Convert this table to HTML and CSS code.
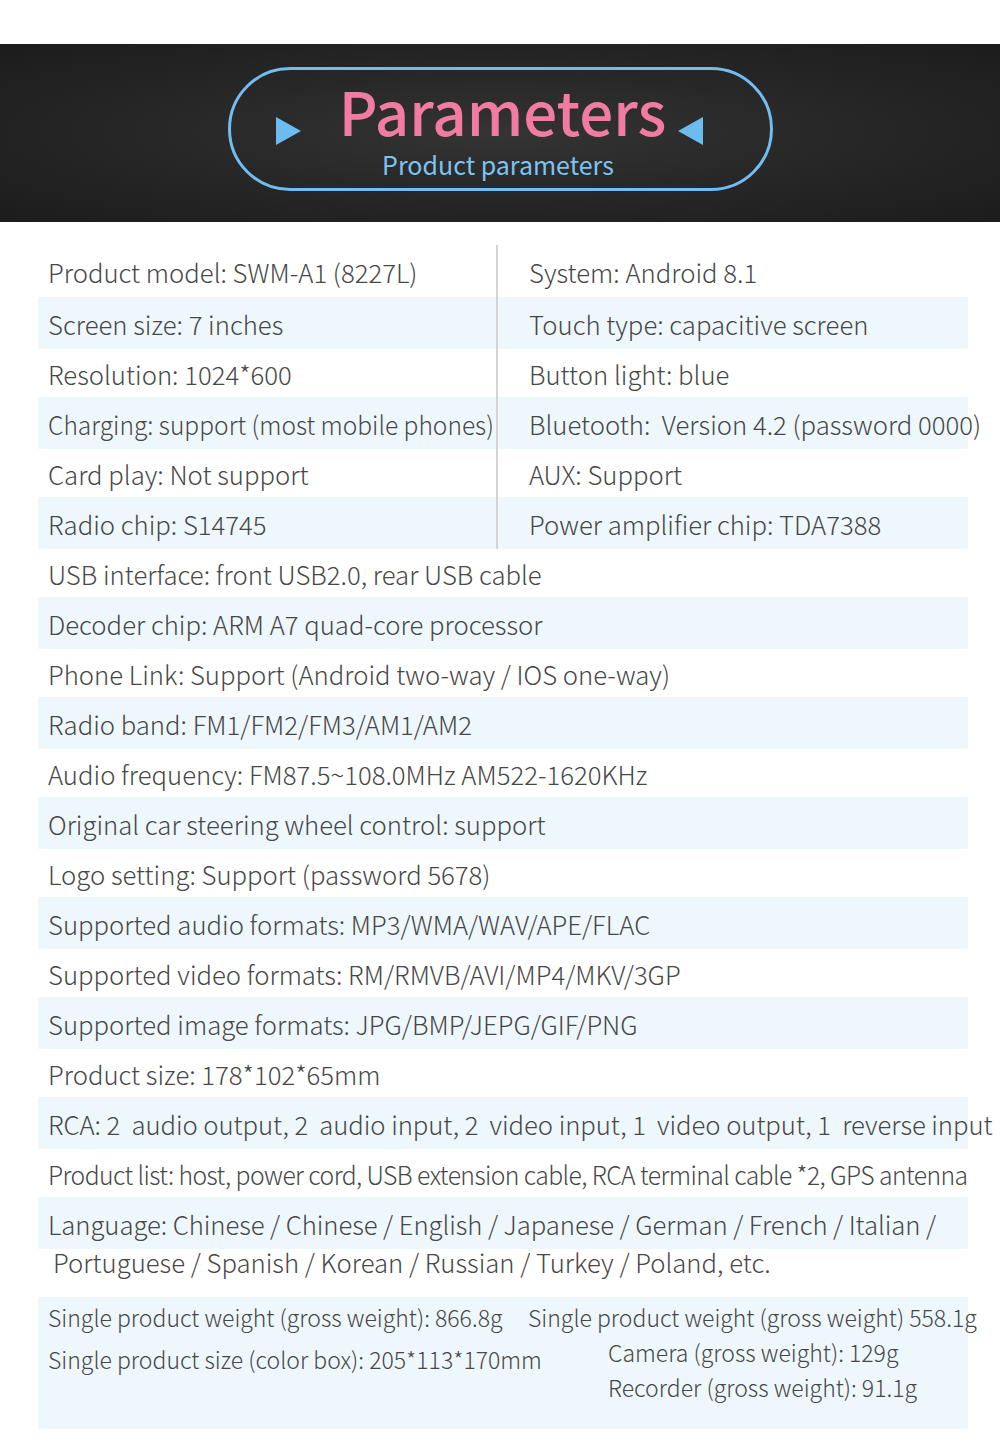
FILE: index.html
```html
<!DOCTYPE html>
<html lang="en">
<head>
    <meta charset="UTF-8">
    <meta name="viewport" content="width=device-width, initial-scale=1.0">
    <title>Parameters</title>
    <link rel="stylesheet" href="styles.css">
</head>
<body>
    <div class="top-gap"></div>

    <header class="banner">
        <div class="pill">
            <div class="title-row">
                <span class="tri tri-right"></span>
                <h1>Parameters</h1>
                <span class="tri tri-left"></span>
            </div>
            <div class="subtitle">Product parameters</div>
        </div>
    </header>

    <main class="specs">
        <section class="split">
            <div class="split-row first">
                <div class="cell left">Product model: SWM-A1 (8227L)</div>
                <div class="cell right">System: Android 8.1</div>
            </div>
            <div class="split-row band">
                <div class="cell left">Screen size: 7 inches</div>
                <div class="cell right">Touch type: capacitive screen</div>
            </div>
            <div class="split-row">
                <div class="cell left">Resolution: 1024*600</div>
                <div class="cell right">Button light: blue</div>
            </div>
            <div class="split-row band">
                <div class="cell left"><span class="squeeze">Charging: support (most mobile phones)</span></div>
                <div class="cell right">Bluetooth:&nbsp; Version 4.2 (password 0000)</div>
            </div>
            <div class="split-row">
                <div class="cell left">Card play: Not support</div>
                <div class="cell right">AUX: Support</div>
            </div>
            <div class="split-row band">
                <div class="cell left">Radio chip: S14745</div>
                <div class="cell right">Power amplifier chip: TDA7388</div>
            </div>
        </section>

        <div class="row">USB interface: front USB2.0, rear USB cable</div>
        <div class="row band">Decoder chip: ARM A7 quad-core processor</div>
        <div class="row">Phone Link: Support (Android two-way / IOS one-way)</div>
        <div class="row band">Radio band: FM1/FM2/FM3/AM1/AM2</div>
        <div class="row">Audio frequency: FM87.5~108.0MHz AM522-1620KHz</div>
        <div class="row band">Original car steering wheel control: support</div>
        <div class="row">Logo setting: Support (password 5678)</div>
        <div class="row band">Supported audio formats: MP3/WMA/WAV/APE/FLAC</div>
        <div class="row">Supported video formats: RM/RMVB/AVI/MP4/MKV/3GP</div>
        <div class="row band">Supported image formats: JPG/BMP/JEPG/GIF/PNG</div>
        <div class="row">Product size: 178*102*65mm</div>
        <div class="row band tight">RCA: 2&nbsp; audio output, 2&nbsp; audio input, 2&nbsp; video input, 1&nbsp; video output, 1&nbsp; reverse input</div>
        <div class="row"><span class="narrow">Product list: host, power cord, USB extension cable, RCA terminal cable *2, GPS antenna</span></div>
        <div class="row band tight">Language: Chinese / Chinese / English / Japanese / German / French / Italian /</div>
        <div class="row cont">Portuguese / Spanish / Korean / Russian / Turkey / Poland, etc.</div>

        <section class="weights band">
            <div class="weights-col">
                <div class="w-line">Single product weight (gross weight): 866.8g</div>
                <div class="w-line tall">Single product size (color box): 205*113*170mm</div>
            </div>
            <div class="weights-col right-col">
                <div class="w-line">Single product weight (gross weight) 558.1g</div>
                <div class="w-line sub short">Camera (gross weight): 129g</div>
                <div class="w-line sub">Recorder (gross weight): 91.1g</div>
            </div>
        </section>
    </main>
</body>
</html>
```

FILE: styles.css
```css
body {
    margin: 0;
    background: #ffffff;
    font-family: "Noto Sans CJK SC", "Noto Sans", sans-serif;
    font-weight: 300;
    color: #474747;
}
.top-gap {
    height: 44px;
}
.banner {
    height: 178px;
    background: radial-gradient(ellipse at 50% 50%, #343434 0%, #282828 45%, #1c1c1c 100%);
    display: flex;
    align-items: center;
    justify-content: center;
}
.pill {
    width: 539px;
    height: 118px;
    border: 3px solid #72bdf0;
    border-radius: 62px;
    display: flex;
    flex-direction: column;
    align-items: center;
    margin: 0 0 8px 1px;
}
.title-row {
    display: flex;
    align-items: flex-start;
    height: 80px;
    margin-left: -22px;
}
h1 {
    margin: 10px 12px 0 38px;
    font-size: 60px;
    font-weight: 500;
    color: #f27ba1;
    line-height: 60px;
}
.tri {
    width: 0;
    height: 0;
    border-top: 14px solid transparent;
    border-bottom: 14px solid transparent;
    margin-top: 47px;
}
.tri-right {
    border-left: 25px solid #6cbcf2;
}
.tri-left {
    border-right: 25px solid #6cbcf2;
}
.subtitle {
    font-size: 25px;
    font-weight: 400;
    color: #7cc4f2;
    line-height: 1;
    margin-top: 2px;
    margin-left: -5px;
}

.specs {
    width: 930px;
    margin: 16px 0 0 38px;
    font-size: 25.7px;
}
.band {
    background: #eef7fc;
}
.split-row {
    display: flex;
    height: 48px;
}
.split-row.band {
    height: 52px;
}
.split-row.first {
    height: 59px;
    padding-top: 7px;
    box-sizing: border-box;
}
.cell {
    display: flex;
    align-items: center;
    white-space: nowrap;
}
.cell.left {
    width: 460px;
    padding-left: 10px;
    box-sizing: border-box;
    border-right: 2px solid #d4d4d4;
}
.cell.right {
    padding-left: 31px;
}
.squeeze {
    display: inline-block;
    transform-origin: left center;
    transform: scaleX(0.955);
}
.row {
    height: 48px;
    display: flex;
    align-items: center;
    padding-left: 10px;
    white-space: nowrap;
}
.row.band {
    height: 52px;
}
.row.tight {
    letter-spacing: -0.07px;
}
.row.cont {
    padding-left: 15px;
    padding-bottom: 24px;
    box-sizing: border-box;
}
.narrow {
    display: inline-block;
    transform-origin: left center;
    transform: scaleX(0.962);
    letter-spacing: -0.6px;
}
.weights {
    height: 132px;
    display: flex;
    padding-left: 10px;
    box-sizing: border-box;
    font-size: 23px;
}
.weights-col {
    width: 480px;
}
.right-col {
    width: 440px;
}
.w-line {
    height: 40px;
    display: flex;
    align-items: center;
    white-space: nowrap;
}
.w-line.tall {
    height: 44px;
}
.w-line.sub {
    padding-left: 80px;
}
.w-line.short {
    height: 30px;
}
```
